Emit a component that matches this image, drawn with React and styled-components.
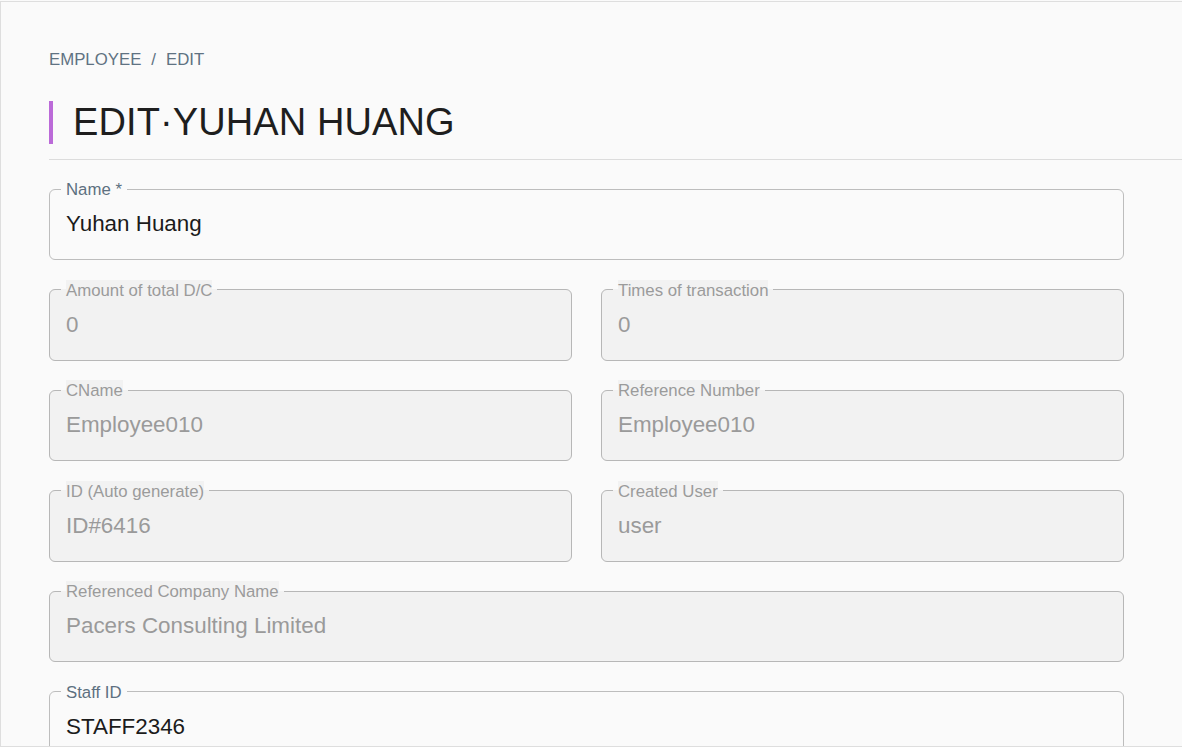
import React from 'react';
import styled, { createGlobalStyle } from 'styled-components';

const GlobalStyle = createGlobalStyle`
  html, body {
    margin: 0;
    padding: 0;
    background: #fafafa;
    overflow: hidden;
  }
  body {
    font-family: "Liberation Sans", Arial, sans-serif;
  }
`;

const Frame = styled.div`
  box-sizing: border-box;
  margin-top: 1px;
  height: 746px;
  border: 1px solid #dedede;
  border-right: none;
  padding-left: 48px;
  background: #fafafa;
  overflow: hidden;
`;

const Header = styled.header`
  padding-top: 48px;
  padding-bottom: 15px;
  border-bottom: 1px solid #dcdcdc;
`;

const Crumbs = styled.nav`
  display: flex;
  font-size: 16.8px;
  line-height: 20px;
  color: #5f7282;
  text-transform: uppercase;
  .sep {
    margin: 0 10px;
  }
`;

const TitleRow = styled.div`
  display: flex;
  align-items: center;
  height: 43px;
  margin-top: 31px;
`;

const Accent = styled.span`
  align-self: stretch;
  width: 4px;
  background: #bb6ad8;
  margin-right: 20px;
`;

const Title = styled.h1`
  margin: 0;
  font-size: 38px;
  font-weight: 400;
  line-height: 43px;
  color: #1e1e1e;
  letter-spacing: 0.1px;
`;

const Form = styled.form`
  display: grid;
  width: 1075px;
  grid-template-columns: 523px 523px;
  column-gap: 29px;
  row-gap: 18.6px;
  padding-top: 18px;
`;

const Field = styled.fieldset`
  box-sizing: border-box;
  margin: 0;
  min-width: 0;
  grid-column: ${(p) => (p.$wide ? '1 / -1' : 'auto')};
  padding: 1px 16px 12px 16px;
  border: 1px solid ${(p) => (p.$disabled ? '#b7b7b7' : '#bdbdbd')};
  border-radius: 6px;
  background: ${(p) => (p.$disabled ? '#f2f2f2' : 'transparent')};
`;

const Legend = styled.legend`
  margin-left: -5px;
  padding: 1px 5px 0;
  font-size: 16.8px;
  line-height: 21px;
  color: ${(p) => (p.$disabled ? '#9b9b9b' : '#5d7080')};
  span {
    display: inline-block;
    background: ${(p) => (p.$disabled ? '#f2f2f2' : 'transparent')};
  }
`;

const Value = styled.div`
  font-size: 22.4px;
  line-height: 46px;
  color: ${(p) => (p.$disabled ? '#9a9a9a' : '#1b1b1b')};
  white-space: nowrap;
`;

const fields = [
  { label: 'Name *', value: 'Yuhan Huang', wide: true },
  { label: 'Amount of total D/C', value: '0', disabled: true },
  { label: 'Times of transaction', value: '0', disabled: true },
  { label: 'CName', value: 'Employee010', disabled: true },
  { label: 'Reference Number', value: 'Employee010', disabled: true },
  { label: 'ID (Auto generate)', value: 'ID#6416', disabled: true },
  { label: 'Created User', value: 'user', disabled: true },
  { label: 'Referenced Company Name', value: 'Pacers Consulting Limited', disabled: true, wide: true },
  { label: 'Staff ID', value: 'STAFF2346', wide: true },
];

export default function App() {
  return (
    <>
      <GlobalStyle />
      <Frame>
        <Header>
          <Crumbs>
            <span>Employee</span>
            <span className="sep">/</span>
            <span>Edit</span>
          </Crumbs>
          <TitleRow>
            <Accent />
            <Title>EDIT·YUHAN HUANG</Title>
          </TitleRow>
        </Header>
        <Form>
          {fields.map((f) => (
            <Field key={f.label} $wide={f.wide} $disabled={f.disabled}>
              <Legend $disabled={f.disabled}>
                <span>{f.label}</span>
              </Legend>
              <Value $disabled={f.disabled}>{f.value}</Value>
            </Field>
          ))}
        </Form>
      </Frame>
    </>
  );
}
